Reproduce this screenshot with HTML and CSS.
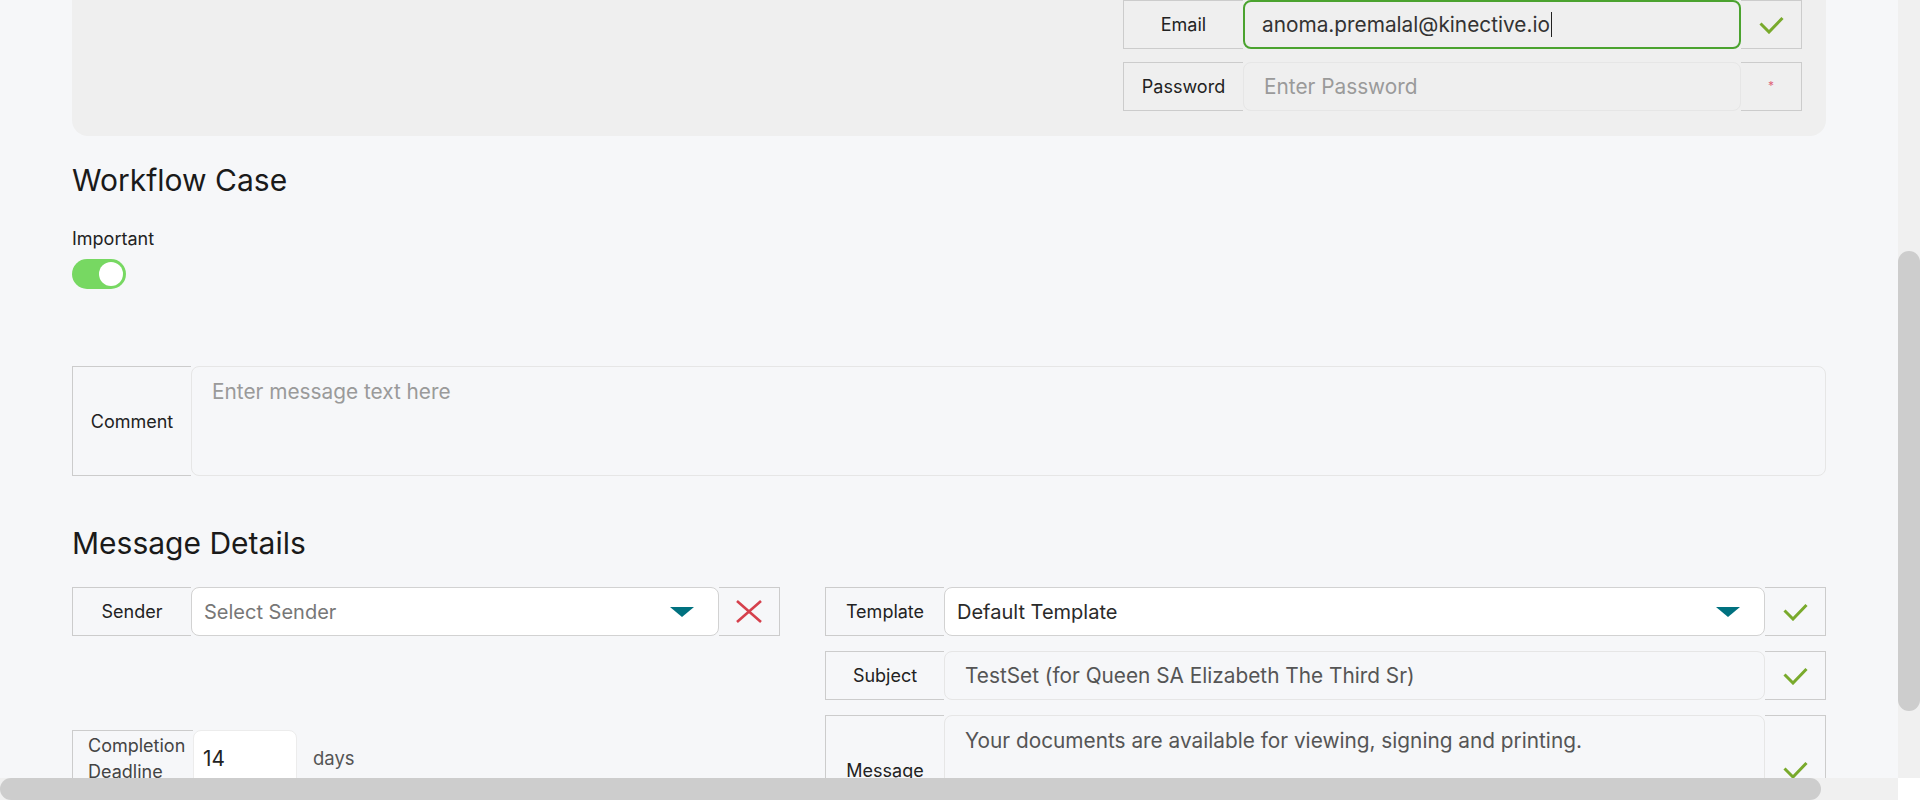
FILE: index.html
```html
<!DOCTYPE html>
<html lang="en">
<head>
    <meta charset="UTF-8">
    <meta name="viewport" content="width=device-width, initial-scale=1.0">
    <title>Workflow Case</title>
    <link rel="stylesheet" href="styles.css">
</head>
<body>
    <div class="page">
        <div class="content">
            <section class="card">
                <div class="card-fields">
                    <div class="field">
                        <div class="field-label">Email</div>
                        <div class="field-input is-valid">anoma.premalal@kinective.io<span class="caret"></span></div>
                        <div class="field-addon"><svg class="icon-check" width="25" height="18" viewBox="0 0 25 18"><polyline points="1.5 7.5 10 16 23.5 2" /></svg></div>
                    </div>
                    <div class="field">
                        <div class="field-label">Password</div>
                        <div class="field-input placeholder">Enter Password</div>
                        <div class="field-addon"><span class="required">*</span></div>
                    </div>
                </div>
            </section>

            <h2 class="section-title workflow-title">Workflow Case</h2>
            <div class="switch-label">Important</div>
            <div class="switch is-on"><span class="switch-knob"></span></div>

            <div class="field field-tall comment-field">
                <div class="field-label">Comment</div>
                <div class="field-input field-text placeholder">Enter message text here</div>
            </div>

            <h2 class="section-title details-title">Message Details</h2>
            <div class="details">
                <div class="details-col">
                    <div class="field">
                        <div class="field-label">Sender</div>
                        <div class="field-input field-select placeholder">
                            <span>Select Sender</span>
                            <svg width="24" height="10" viewBox="0 0 24 10"><polygon points="0 0 24 0 12 10" fill="#00717f" /></svg>
                        </div>
                        <div class="field-addon">
                            <svg width="26" height="23" viewBox="0 0 26 23"><path d="M1 1 L25 22 M25 1 L1 22" stroke="#d5404c" stroke-width="2.6" fill="none" /></svg>
                        </div>
                    </div>

                    <div class="deadline">
                        <div class="field-label deadline-label">Completion<br>Deadline</div>
                        <div class="deadline-input">14</div>
                        <div class="deadline-unit">days</div>
                    </div>
                </div>

                <div class="details-col">
                    <div class="field">
                        <div class="field-label">Template</div>
                        <div class="field-input field-select">
                            <span>Default Template</span>
                            <svg width="24" height="10" viewBox="0 0 24 10"><polygon points="0 0 24 0 12 10" fill="#00717f" /></svg>
                        </div>
                        <div class="field-addon"><svg class="icon-check" width="25" height="18" viewBox="0 0 25 18"><polyline points="1.5 7.5 10 16 23.5 2" /></svg></div>
                    </div>
                    <div class="field">
                        <div class="field-label">Subject</div>
                        <div class="field-input muted">TestSet (for Queen SA Elizabeth The Third Sr)</div>
                        <div class="field-addon"><svg class="icon-check" width="25" height="18" viewBox="0 0 25 18"><polyline points="1.5 7.5 10 16 23.5 2" /></svg></div>
                    </div>
                    <div class="field field-tall">
                        <div class="field-label">Message</div>
                        <div class="field-input field-text muted">Your documents are available for viewing, signing and printing.</div>
                        <div class="field-addon"><svg class="icon-check" width="25" height="18" viewBox="0 0 25 18"><polyline points="1.5 7.5 10 16 23.5 2" /></svg></div>
                    </div>
                </div>
            </div>
        </div>
    </div>

    <!-- window scrollbars -->
    <div class="scrollbar scrollbar-v"><div class="scrollbar-thumb"></div></div>
    <div class="scrollbar scrollbar-h"><div class="scrollbar-thumb"></div></div>
    <div class="scrollbar-corner"></div>
</body>
</html>
```

FILE: styles.css
```css
* {
    margin: 0;
    padding: 0;
    box-sizing: border-box;
}

body {
    background: #f6f7f9;
    color: #222;
    font-family: Inter, 'Noto Sans', sans-serif;
    overflow: hidden;
}

.page {
    height: 100vh;
    overflow: hidden;
}

/* Scrollbars */
.scrollbar {
    position: fixed;
    background: #f0f0f0;
}

.scrollbar-thumb {
    background: #cdcdcd;
    border-radius: 11px;
}

.scrollbar-v {
    top: 0;
    right: 0;
    width: 22px;
    height: 778px;
}

.scrollbar-v .scrollbar-thumb {
    margin-top: 251px;
    height: 460px;
}

.scrollbar-h {
    left: 0;
    bottom: 0;
    width: 1898px;
    height: 22px;
}

.scrollbar-h .scrollbar-thumb {
    width: 1821px;
    height: 22px;
}

.scrollbar-corner {
    position: fixed;
    right: 0;
    bottom: 0;
    width: 22px;
    height: 22px;
    background: #fff;
}

.content {
    width: 1754px;
    margin-left: 72px;
}

.section-title {
    font-size: 30px;
    font-weight: 400;
    line-height: 36px;
    color: #1a1a1a;
}

/* Signer card (scrolled, top is out of view) */
.card {
    display: flex;
    justify-content: flex-end;
    background: #efefef;
    border-radius: 0 0 16px 16px;
    padding: 0 24px 25px 24px;
}

.card-fields {
    width: 679px;
    display: flex;
    flex-direction: column;
    gap: 13px;
}

/* Field rows */
.field {
    display: flex;
    height: 49px;
}

.field-tall {
    height: 110px;
}

.field-label {
    width: 120px;
    flex: none;
    display: flex;
    align-items: center;
    justify-content: center;
    text-align: center;
    border: 1px solid #cccccc;
    border-right: none;
    font-size: 18px;
    color: #222;
}

.field-input {
    flex: 1;
    min-width: 0;
    display: flex;
    align-items: center;
    padding: 0 20px;
    border: 1px solid #e6e6e6;
    border-radius: 8px;
    font-size: 20.8px;
    color: #333;
    white-space: nowrap;
}

.field-input.is-valid {
    border: 2px solid #4ba32f;
    padding-left: 17px;
}

.caret {
    display: inline-block;
    width: 1px;
    height: 25px;
    background: #222;
    margin-left: 1px;
}

.field-input.placeholder {
    color: #9a9a9a;
}

.field-input.muted {
    color: #555;
}

.field-text {
    align-items: flex-start;
    padding-top: 12px;
    line-height: 26px;
}

.field-select {
    justify-content: space-between;
    background: #fff;
    border-color: #d2d2d2;
    padding: 0 24px 0 12px;
    font-size: 20px;
    color: #2a2a2a;
}

.field-select.placeholder {
    color: #777;
}

.field-addon {
    width: 61px;
    flex: none;
    display: flex;
    align-items: center;
    justify-content: center;
    border: 1px solid #cccccc;
    border-left: none;
}

.icon-check polyline {
    fill: none;
    stroke: #79aa2c;
    stroke-width: 3;
}

.required {
    color: #e0657a;
    font-size: 12px;
    line-height: 1;
    margin-top: -2px;
}

/* Workflow case */
.workflow-title {
    margin-top: 26px;
}

.switch-label {
    margin-top: 29px;
    font-size: 18px;
    line-height: 24px;
}

.switch {
    position: relative;
    margin-top: 8px;
    width: 54px;
    height: 30px;
    border-radius: 15px;
    background: #c8c8c8;
}

.switch.is-on {
    background: #77d862;
}

.switch-knob {
    position: absolute;
    top: 3px;
    left: 3px;
    width: 24px;
    height: 24px;
    border-radius: 50%;
    background: #fff;
}

.switch.is-on .switch-knob {
    left: 27px;
}

.comment-field {
    margin-top: 77px;
}

.comment-field .field-label {
    width: 119px;
}

/* Message details */
.details-title {
    margin-top: 49px;
}

.details {
    margin-top: 26px;
    display: grid;
    grid-template-columns: 708px 1fr;
    column-gap: 45px;
}

.details-col {
    display: flex;
    flex-direction: column;
    gap: 15px;
}

.details-col .field-label {
    width: 119px;
}

.deadline {
    margin-top: 79px;
    display: flex;
    align-items: stretch;
    height: 56px;
}

.details-col .deadline-label {
    width: 121px;
    justify-content: flex-start;
    text-align: left;
    padding-left: 15px;
    border-bottom: none;
    line-height: 26px;
    color: #444;
}

.deadline-input {
    width: 104px;
    display: flex;
    align-items: center;
    padding-left: 9px;
    background: #fff;
    border: 1px solid #ececec;
    border-radius: 8px;
    font-size: 20.8px;
    color: #222;
}

.deadline-unit {
    display: flex;
    align-items: center;
    margin-left: 16px;
    font-size: 18.5px;
    color: #555;
}
```
